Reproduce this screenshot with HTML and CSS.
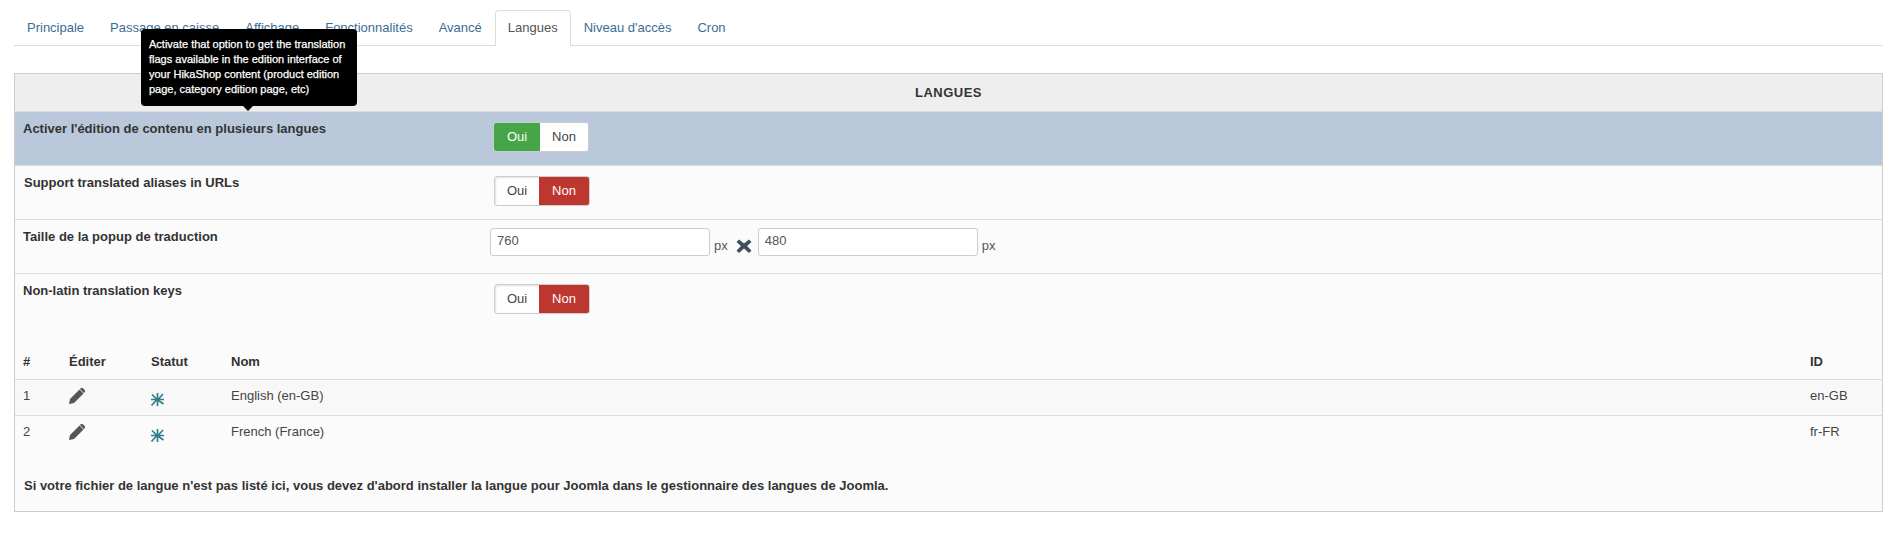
FILE: index.html
```html
<!DOCTYPE html>
<html lang="fr">
<head>
<meta charset="utf-8">
<title>Langues</title>
<link rel="stylesheet" href="styles.css">
</head>
<body>
<nav class="tabs">
  <a class="tab">Principale</a>
  <a class="tab">Passage en caisse</a>
  <a class="tab">Affichage</a>
  <a class="tab">Fonctionnalités</a>
  <a class="tab">Avancé</a>
  <a class="tab active">Langues</a>
  <a class="tab">Niveau d'accès</a>
  <a class="tab">Cron</a>
</nav>
<section class="panel">
  <h2 class="panel-title">LANGUES</h2>
  <div class="row highlight">
    <label class="row-label">Activer l'édition de contenu en plusieurs langues</label>
    <div class="toggle"><span class="opt on-yes">Oui</span><span class="opt">Non</span></div>
  </div>
  <div class="row">
    <label class="row-label shift">Support translated aliases in URLs</label>
    <div class="toggle off"><span class="opt">Oui</span><span class="opt on-no">Non</span></div>
  </div>
  <div class="row">
    <label class="row-label">Taille de la popup de traduction</label>
    <div class="size-fields">
      <input class="field" type="text" value="760"><span class="unit">px</span>
      <svg class="times" viewBox="0 0 16 16" width="16" height="16"><path d="M3 1.500 8 5.500l5-4 2.500 2.500-4.500 4 4.500 4.500-2.500 2.500L8 10.500 3 15 .5 12.500 5 8 .5 4z" fill="#3f4d5c"/></svg>
      <input class="field" type="text" value="480"><span class="unit">px</span>
    </div>
  </div>
  <div class="row last">
    <label class="row-label">Non-latin translation keys</label>
    <div class="toggle off"><span class="opt">Oui</span><span class="opt on-no">Non</span></div>
  </div>
  <table class="lang-table">
    <thead>
      <tr><th class="c-num">#</th><th class="c-edit">Éditer</th><th class="c-status">Statut</th><th>Nom</th><th class="c-id">ID</th></tr>
    </thead>
    <tbody>
      <tr class="striped">
        <td>1</td>
        <td><svg class="pencil" viewBox="0 0 18 18" width="18" height="18"><path d="M1 17l1-5L11.500 2.500l4 4L6 16zM12.800 1.300a1.500 1.500 0 0 1 2.100 0l1.800 1.800a1.500 1.500 0 0 1 0 2.100l-.8.800-4-4z" fill="#555"/></svg></td>
        <td><svg class="star" viewBox="0 0 15 15" width="15" height="15"><path d="M7.500 1v13M1 7.500h13M2 2.500 6.500 7M13 2 8.500 7M1.500 13.500 6.500 8M8.500 8.500l5 3.500" stroke="#2f7f8c" stroke-width="1.700" fill="none"/></svg></td>
        <td>English (en-GB)</td>
        <td>en-GB</td>
      </tr>
      <tr>
        <td>2</td>
        <td><svg class="pencil" viewBox="0 0 18 18" width="18" height="18"><path d="M1 17l1-5L11.500 2.500l4 4L6 16zM12.800 1.300a1.500 1.500 0 0 1 2.100 0l1.800 1.800a1.500 1.500 0 0 1 0 2.100l-.8.800-4-4z" fill="#555"/></svg></td>
        <td><svg class="star" viewBox="0 0 15 15" width="15" height="15"><path d="M7.500 1v13M1 7.500h13M2 2.500 6.500 7M13 2 8.500 7M1.500 13.500 6.500 8M8.500 8.500l5 3.500" stroke="#2f7f8c" stroke-width="1.700" fill="none"/></svg></td>
        <td>French (France)</td>
        <td>fr-FR</td>
      </tr>
    </tbody>
  </table>
  <p class="note">Si votre fichier de langue n'est pas listé ici, vous devez d'abord installer la langue pour Joomla dans le gestionnaire des langues de Joomla.</p>
</section>
<div class="tooltip">Activate that option to get the translation flags available in the edition interface of your HikaShop content (product edition page, category edition page, etc)</div>
</body>
</html>
```
FILE: styles.css
```css
* { box-sizing: border-box; }
html, body { margin: 0; padding: 0; }
body {
  position: relative;
  height: 536px;
  overflow: hidden;
  padding: 10px 16px 0 14px;
  background: #fff;
  font-family: "Liberation Sans", Arial, sans-serif;
  font-size: 13px;
  line-height: 18px;
  color: #333;
}
.tabs {
  display: flex;
  height: 36px;
  border-bottom: 1px solid #ddd;
}
.tab {
  height: 36px;
  padding: 8px 12px;
  color: #3d6c94;
  border: 1px solid transparent;
  border-bottom: 0;
  border-radius: 4px 4px 0 0;
}
.tab.active {
  color: #555;
  background: #fff;
  border-color: #ddd;
}
.panel {
  margin-top: 27px;
  height: 439px;
  border: 1px solid #ccc;
  background: #fbfbfb;
}
.panel-title {
  margin: 0;
  height: 38px;
  text-align: center;
  font-size: 13px;
  font-weight: bold;
  line-height: 37px;
  letter-spacing: .5px;
  background: #eee;
  border-bottom: 1px solid #ddd;
}
.row {
  display: grid;
  grid-template-columns: 468px 1fr;
  height: 54px;
  padding: 8px 8px 0;
  border-bottom: 1px solid #ddd;
}
.row.highlight {
  background: #b9c9db;
  border-bottom-color: #d8dde2;
}
.row.last { border-bottom: 0; height: 69px; }
.row-label {
  font-weight: bold;
  line-height: 18px;
  color: #333;
}
.row-label.shift { padding-left: 1px; }
.toggle {
  display: flex;
  width: 96px;
  height: 30px;
  margin: 2px 0 0 2px;
  border: 1px solid #ccc;
  border-radius: 3px;
  background: #fff;
  overflow: hidden;
}
.toggle.off {
  margin-left: 3px;
  box-shadow: inset 1px 1px 2px rgba(0, 0, 0, .12);
}
.opt {
  flex: 1;
  text-align: center;
  line-height: 27px;
  font-size: 13px;
  color: #444;
}
.opt.on-yes { flex: 0 0 46px; background: #46a546; color: #fff; }
.opt.on-no { flex: 0 0 50px; background: #bd362f; color: #fff; }
.size-fields {
  display: flex;
  align-items: flex-start;
  margin-left: -1px;
}
.field {
  width: 220px;
  height: 28px;
  padding: 0 6px 4px;
  border: 1px solid #ccc;
  border-radius: 3px;
  background: #fff;
  color: #555;
  font: 13px/18px "Liberation Sans", Arial, sans-serif;
}
.unit { margin: 9px 0 0 4px; color: #555; }
.times { margin: 10px 6px 0 8px; }
.lang-table {
  width: 100%;
  border-collapse: collapse;
  margin-top: 0;
}
.lang-table th {
  height: 36px;
  padding: 2px 0 0;
  text-align: left;
  font-weight: bold;
  color: #333;
  border-bottom: 1px solid #ddd;
}
.lang-table td {
  height: 36px;
  padding: 0 0 2px;
  vertical-align: middle;
  color: #444;
}
.lang-table .striped td { background: #f8f8f8; border-bottom: 1px solid #ddd; }
.lang-table th:first-child, .lang-table td:first-child { padding-left: 8px; }
.c-num { width: 54px; }
.c-edit { width: 82px; }
.c-status { width: 80px; }
.c-id { width: 72px; }
.pencil { display: block; margin: -1px 0 0 -1px; }
.star { display: block; margin: 6px 0 0 -1px; }
.note {
  margin: 26px 0 0 9px;
  font-weight: bold;
  color: #333;
}
.tooltip {
  position: absolute;
  left: 141px;
  top: 29px;
  width: 216px;
  height: 77px;
  padding: 8px;
  background: #000;
  color: #fff;
  border-radius: 4px;
  font-size: 11px;
  line-height: 15px;
  -webkit-text-stroke: .25px #fff;
}
.tooltip::after {
  content: "";
  position: absolute;
  left: 102px;
  bottom: -5px;
  border: 5px solid transparent;
  border-top-color: #000;
  border-bottom: 0;
}
```
